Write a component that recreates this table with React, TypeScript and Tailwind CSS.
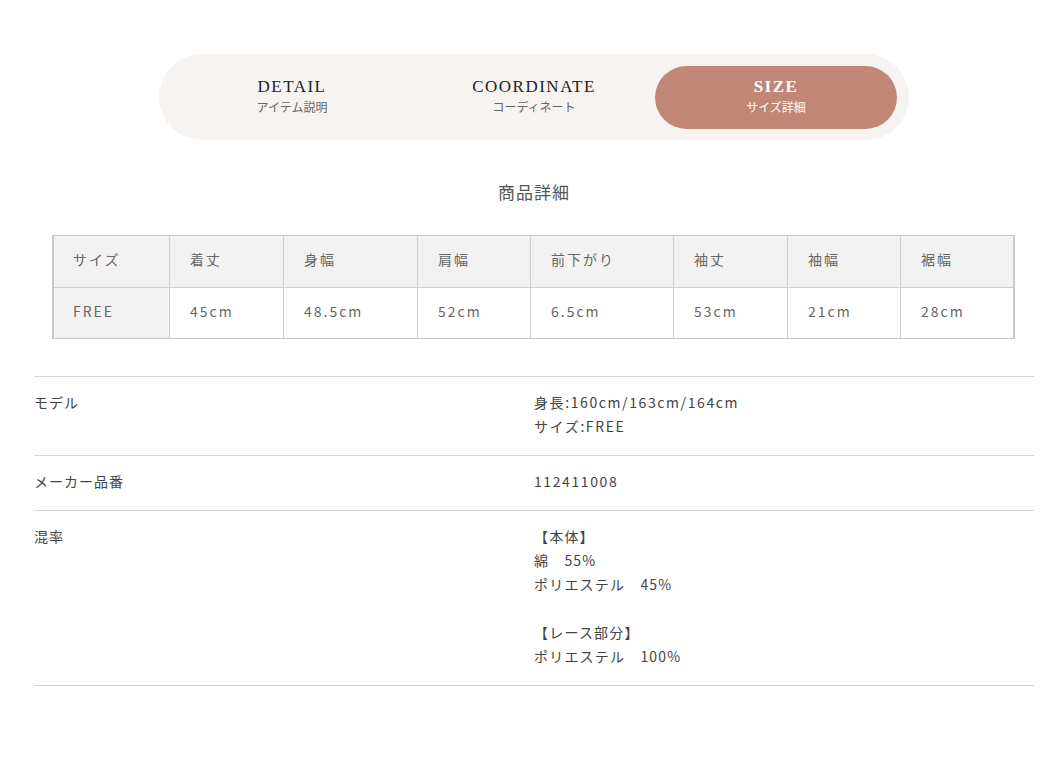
import React from "react";

const jp = { fontFamily: '"Noto Sans CJK JP", "Noto Sans", sans-serif' };
const serif = { fontFamily: '"Liberation Serif", "DejaVu Serif", serif' };

const heads = ["サイズ", "着丈", "身幅", "肩幅", "前下がり", "袖丈", "袖幅", "裾幅"];
const vals = ["FREE", "45cm", "48.5cm", "52cm", "6.5cm", "53cm", "21cm", "28cm"];

function Tab({ en, jpText, active }: { en: string; jpText: string; active?: boolean }) {
  return (
    <div
      className={`flex flex-col items-center justify-center rounded-full pb-[4px] ${
        active ? "bg-[#c08777] text-white" : "text-[#222]"
      }`}
    >
      <div style={serif} className={`text-[17px] leading-[22px] tracking-[1.5px] ${active ? "font-bold" : ""}`}>
        {en}
      </div>
      <div style={jp} className={`mt-[1px] text-[12px] leading-[16px] ${active ? "text-white" : "text-[#666]"}`}>
        {jpText}
      </div>
    </div>
  );
}

export default function App() {
  return (
    <div className="min-h-[770px] w-full bg-white" style={jp}>
      <div className="ml-[34px] w-[1000px] pt-[54px]">
        <div className="mx-auto grid h-[86px] w-[750px] grid-cols-3 rounded-full bg-[#f7f3f1] px-[12px] pt-[12px] pb-[11px]">
          <Tab en="DETAIL" jpText="アイテム説明" />
          <Tab en="COORDINATE" jpText="コーディネート" />
          <Tab en="SIZE" jpText="サイズ詳細" active />
        </div>

        <h2 className="mt-[40px] text-center text-[17px] leading-[24px] tracking-[1px] text-[#555]">商品詳細</h2>

        <div className="mt-[31px] ml-[18px] w-[963px] border-x-2 border-y border-[#c9c9c9]">
          <div className="grid h-[51px] grid-cols-[115px_114px_134px_113px_143px_114px_113px_113px] bg-[#f2f2f2]">
            {heads.map((h, i) => (
              <div
                key={h}
                className={`flex items-center pb-[5px] text-[14px] tracking-[2px] text-[#666] ${
                  i === 0 ? "pl-[19px]" : "border-l border-[#cfcfcf] pl-[20px]"
                }`}
              >
                {h}
              </div>
            ))}
          </div>
          <div className="grid h-[51px] grid-cols-[115px_114px_134px_113px_143px_114px_113px_113px] border-t border-[#cfcfcf]">
            {vals.map((v, i) => (
              <div
                key={v}
                className={`flex items-center pb-[3px] text-[14px] tracking-[2px] text-[#666] ${
                  i === 0 ? "bg-[#f2f2f2] pl-[19px]" : "border-l border-[#cfcfcf] bg-white pl-[20px]"
                }`}
              >
                {v}
              </div>
            ))}
          </div>
        </div>

        <div className="mt-[37px] border-t border-[#d4d4d4]">
          <div className="grid grid-cols-2 border-b border-[#d4d4d4] pt-[13px] pb-[17px] text-[14px] leading-[24px]">
            <div className="tracking-[1px] text-[#444]">モデル</div>
            <div className="tracking-[1.6px] text-[#444]">
              <div>身長:160cm/163cm/164cm</div>
              <div>サイズ:FREE</div>
            </div>
          </div>
          <div className="grid grid-cols-2 border-b border-[#d4d4d4] pt-[13px] pb-[17px] text-[14px] leading-[24px]">
            <div className="tracking-[1px] text-[#444]">メーカー品番</div>
            <div className="tracking-[1.6px] text-[#444]">112411008</div>
          </div>
          <div className="grid grid-cols-2 border-b border-[#d4d4d4] pt-[13px] pb-[17px] text-[14px] leading-[24px]">
            <div className="tracking-[1px] text-[#444]">混率</div>
            <div className="tracking-[1.2px] text-[#444]">
              <div>【本体】</div>
              <div>綿　55%</div>
              <div>ポリエステル　45%</div>
              <div>&nbsp;</div>
              <div>【レース部分】</div>
              <div>ポリエステル　100%</div>
            </div>
          </div>
        </div>
      </div>
    </div>
  );
}
